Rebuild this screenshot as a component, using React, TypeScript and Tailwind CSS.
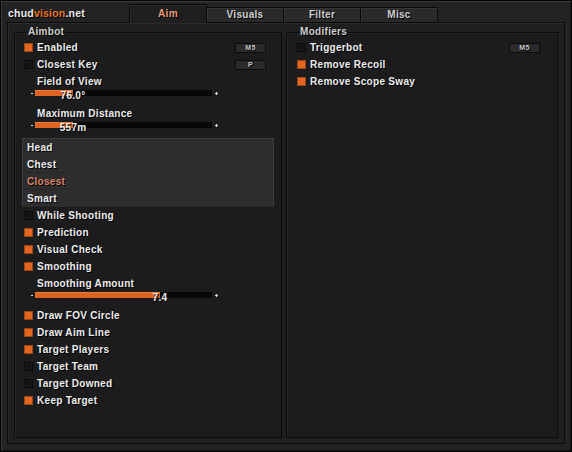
import React from 'react';

const shadow = '[text-shadow:1px_1px_0_#000]';

function Box({ on }: { on: boolean }) {
  return (
    <span
      className={
        on
          ? 'block size-[9px] shrink-0 border border-[#9c4515] bg-[#e2661f]'
          : 'block size-[9px] shrink-0 border border-[#0a0a0a] bg-[#131313] shadow-[inset_0_0_0_1px_#181818]'
      }
    />
  );
}

function Key({ label }: { label: string }) {
  return (
    <span className="ml-auto flex h-[10px] w-[31px] items-center justify-center border border-[#0c0c0c] bg-[#2b2b2b] text-[7px] leading-none font-bold text-[#c4c4c4] tracking-[0.5px]">
      {label}
    </span>
  );
}

function Check({ label, on, keyLabel }: { label: string; on: boolean; keyLabel?: string }) {
  return (
    <div className="flex h-[17px] items-center">
      <Box on={on} />
      <span className="ml-[4px]">{label}</span>
      {keyLabel && <Key label={keyLabel} />}
    </div>
  );
}

function Label({ text }: { text: string }) {
  return <div className="flex h-[17px] items-center pl-[13px]">{text}</div>;
}

function Slider({ pct, text }: { pct: number; text: string }) {
  return (
    <div className="flex h-[15px] items-start pl-[7px]">
      <div className="flex h-[6px] items-center">
        <span className="block h-[1px] w-[2px] bg-[#dddddd]" />
        <div className="relative ml-[2px] h-[6px] w-[177px] bg-[#070707]">
          <div className="h-full bg-[#dc6420] shadow-[inset_0_1px_0_#e97b3a]" style={{ width: `${pct}%` }} />
          <span
            className="absolute top-0 -translate-x-1/2 whitespace-nowrap leading-[12px]"
            style={{ left: `${pct}%` }}
          >
            {text}
          </span>
        </div>
        <span className="relative ml-[3px] block size-[3px]">
          <span className="absolute left-0 top-[1px] block h-[1px] w-[3px] bg-[#dddddd]" />
          <span className="absolute left-[1px] top-0 block h-[3px] w-[1px] bg-[#dddddd]" />
        </span>
      </div>
    </div>
  );
}

function Group({ title, className, children }: { title: string; className: string; children: React.ReactNode }) {
  return (
    <fieldset className={`border border-[#0b0b0b] bg-[#1c1c1c] shadow-[inset_1px_1px_0_#262626] ${className}`}>
      <legend className="ml-[12px] px-[1px] leading-[12px] text-[#cdcdcd]">{title}</legend>
      {children}
    </fieldset>
  );
}

const targets = ['Head', 'Chest', 'Closest', 'Smart'];

export default function App() {
  const tabs = ['Aim', 'Visuals', 'Filter', 'Misc'];
  return (
    <div
      className={`h-[452px] w-[572px] bg-[#050505] p-px font-['Liberation_Sans',Arial,sans-serif] text-[10px] font-bold leading-[12px] tracking-[0.3px] text-[#eeeeee] ${shadow}`}
    >
      <div className="flex h-[450px] flex-col border-t border-l border-[#3a3a3a] border-r border-b border-r-[#141414] border-b-[#141414] bg-[#232323]">
        <div className="flex h-[20px] shrink-0">
          <div className="flex w-[127px] items-center pl-[6px] pt-[2px] text-[10.5px] tracking-[0.2px]">
            <span>chud</span>
            <span className="text-[#e8742a]">vision</span>
            <span>.net</span>
          </div>
          <div className="flex items-end">
            {tabs.map((t, i) =>
              i === 0 ? (
                <div
                  key={t}
                  className="relative z-10 -mb-px flex h-[19px] w-[78px] items-center justify-center border-t border-x border-[#0b0b0b] bg-[#1f1f1f] pb-[1px] text-[#ec9a7c] shadow-[inset_1px_1px_0_#2c2c2c]"
                >
                  {t}
                </div>
              ) : (
                <div
                  key={t}
                  className="-ml-px flex h-[15px] w-[78px] items-center justify-center border-t border-x border-[#0b0b0b] bg-[#2a2a2a] text-[#d0d0d0] shadow-[inset_1px_1px_0_#353535]"
                >
                  {t}
                </div>
              )
            )}
          </div>
        </div>

        <div className="ml-[5px] flex h-[422px] w-[558px] gap-[4px] border border-[#0b0b0b] bg-[#1f1f1f] px-[6px] pt-[3px] pb-[5px] shadow-[inset_1px_1px_0_#2a2a2a]">
          <Group title="Aimbot" className="w-[268px]">
            <div className="mt-[1px] flex flex-col pl-[9px] pr-[15px]">
              <Check label="Enabled" on keyLabel="M5" />
              <Check label="Closest Key" on={false} keyLabel="P" />
              <Label text="Field of View" />
              <Slider pct={21.5} text="76.0°" />
              <Label text="Maximum Distance" />
              <Slider pct={21.5} text="557m" />
            </div>
            <div className="mx-[7px] mt-[1px] border-t border-x border-[#3c3c3c] bg-[#2a2a2a]">
              {targets.map((t) => (
                <div
                  key={t}
                  className={`flex h-[17px] items-center bg-[#2d2d2d] pl-[4px] shadow-[inset_0_-1px_0_#282828] ${t === 'Closest' ? 'text-[#d98268]' : ''}`}
                >
                  {t}
                </div>
              ))}
            </div>
            <div className="flex flex-col pl-[9px] pr-[15px]">
              <Check label="While Shooting" on={false} />
              <Check label="Prediction" on />
              <Check label="Visual Check" on />
              <Check label="Smoothing" on />
              <Label text="Smoothing Amount" />
              <Slider pct={70.6} text="7.4" />
              <Check label="Draw FOV Circle" on />
              <Check label="Draw Aim Line" on />
              <Check label="Target Players" on />
              <Check label="Target Team" on={false} />
              <Check label="Target Downed" on={false} />
              <Check label="Keep Target" on />
            </div>
          </Group>
          <Group title="Modifiers" className="flex-1">
            <div className="mt-[1px] flex flex-col pl-[10px] pr-[17px]">
              <Check label="Triggerbot" on={false} keyLabel="M5" />
              <Check label="Remove Recoil" on />
              <Check label="Remove Scope Sway" on />
            </div>
          </Group>
        </div>
      </div>
    </div>
  );
}
